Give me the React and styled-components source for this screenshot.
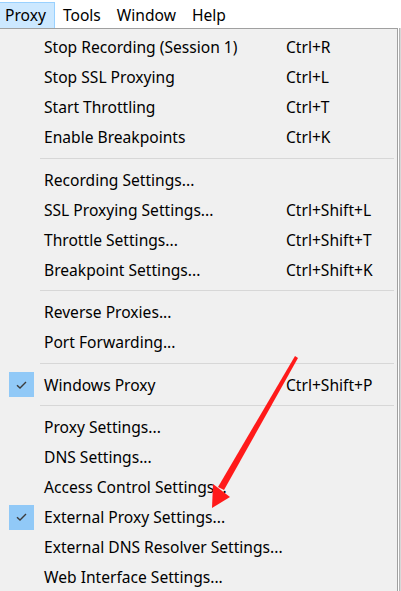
import React from "react";
import styled, { createGlobalStyle } from "styled-components";

const GlobalStyle = createGlobalStyle`
	html, body {
		margin: 0;
		padding: 0;
		background: #ffffff;
	}
	body {
		font-family: "Noto Sans", "Open Sans", sans-serif;
		font-size: 15.6px;
		color: #000000;
	}
`;

const menuBar = [
	{ label: "Proxy", open: true },
	{ label: "Tools" },
	{ label: "Window" },
	{ label: "Help" },
];

// each group ends with a separator, except the last
const groups = [
	[
		{ label: "Stop Recording (Session 1)", key: "Ctrl+R" },
		{ label: "Stop SSL Proxying", key: "Ctrl+L" },
		{ label: "Start Throttling", key: "Ctrl+T" },
		{ label: "Enable Breakpoints", key: "Ctrl+K" },
	],
	[
		{ label: "Recording Settings..." },
		{ label: "SSL Proxying Settings...", key: "Ctrl+Shift+L" },
		{ label: "Throttle Settings...", key: "Ctrl+Shift+T" },
		{ label: "Breakpoint Settings...", key: "Ctrl+Shift+K" },
	],
	[{ label: "Reverse Proxies..." }, { label: "Port Forwarding..." }],
	[{ label: "Windows Proxy", key: "Ctrl+Shift+P", checked: true }],
	[
		{ label: "Proxy Settings..." },
		{ label: "DNS Settings..." },
		{ label: "Access Control Settings..." },
		{ label: "External Proxy Settings...", checked: true },
		{ label: "External DNS Resolver Settings..." },
		{ label: "Web Interface Settings..." },
	],
];

const App = () => {
	return (
		<Page>
			<GlobalStyle />
			<MenuBar>
				{menuBar.map((m, i) => (
					<BarItem key={m.label} $open={m.open} $first={i === 0}>
						{m.label}
					</BarItem>
				))}
			</MenuBar>
			<Body>
				<Menu>
					{groups.map((group, gi) => (
						<React.Fragment key={gi}>
							{group.map((item) => (
								<Row key={item.label}>
									<Gutter>
										{item.checked && (
											<CheckBox>
												<svg width="11" height="8" viewBox="0 0 11 8">
													<path d="M1 4.2 L4 7 L10 1" fill="none" stroke="#3c3c3c" strokeWidth="1.4" />
												</svg>
											</CheckBox>
										)}
									</Gutter>
									<Label>{item.label}</Label>
									<Shortcut>{item.key}</Shortcut>
								</Row>
							))}
							{gi < groups.length - 1 && <Separator />}
						</React.Fragment>
					))}
				</Menu>
				<BehindEdge />
			</Body>
			<Arrow width="401" height="591" viewBox="0 0 401 591">
				<polygon points="295,356 298,358 224,490 218,487" fill="#ff1a1a" />
				<polygon points="212,508 213,484 230,497" fill="#ff1a1a" />
			</Arrow>
		</Page>
	);
};

export default App;

const Page = styled.div`
	position: relative;
	width: 401px;
	height: 591px;
	overflow: hidden;
`;

const MenuBar = styled.div`
	display: flex;
	align-items: flex-end;
	height: 28px;
	box-sizing: border-box;
	padding-top: 2px;
`;

const BarItem = styled.div`
	display: flex;
	align-items: center;
	height: 26px;
	box-sizing: border-box;
	padding: ${(p) => (p.$first ? "0 8px 0 5px" : "0 7px")};
	background: ${(p) => (p.$open ? "#cce8ff" : "transparent")};
	border: 1px solid ${(p) => (p.$open ? "#99d1ff" : "transparent")};
	border-bottom: none;
	border-left: ${(p) => (p.$first ? "none" : "1px solid transparent")};
	line-height: 1;
`;

const Body = styled.div`
	display: flex;
	height: 563px;
`;

const Menu = styled.div`
	width: 397px;
	border-top: 1px solid #a0a0a0;
	border-right: 1px solid #a0a0a0;
	background: #f0f0f0;
	padding-top: 3px;
	box-sizing: content-box;
`;

const BehindEdge = styled.div`
	flex: 1;
	border-left: 1px solid #ffffff;
	background: linear-gradient(90deg, #b4b4b4 0 1px, #d8d8d8 1px);
`;

const Row = styled.div`
	display: grid;
	grid-template-columns: 40px 246px 1fr;
	align-items: center;
	height: 30px;
	white-space: nowrap;
`;

const Gutter = styled.div`
	display: flex;
	align-items: center;
	height: 100%;
	padding-left: 9px;
`;

const CheckBox = styled.div`
	display: flex;
	align-items: center;
	justify-content: center;
	width: 25px;
	height: 25px;
	background: #91c9f7;
`;

const Label = styled.span`
	padding-left: 4px;
	overflow: visible;
`;

const Shortcut = styled.span``;

const Separator = styled.div`
	height: 12.5px;
	display: flex;
	align-items: center;
	padding: 0 3px 0 40px;
	&::after {
		content: "";
		flex: 1;
		height: 1px;
		background: #d7d7d7;
	}
`;

const Arrow = styled.svg`
	position: absolute;
	left: 0;
	top: 0;
	pointer-events: none;
`;
